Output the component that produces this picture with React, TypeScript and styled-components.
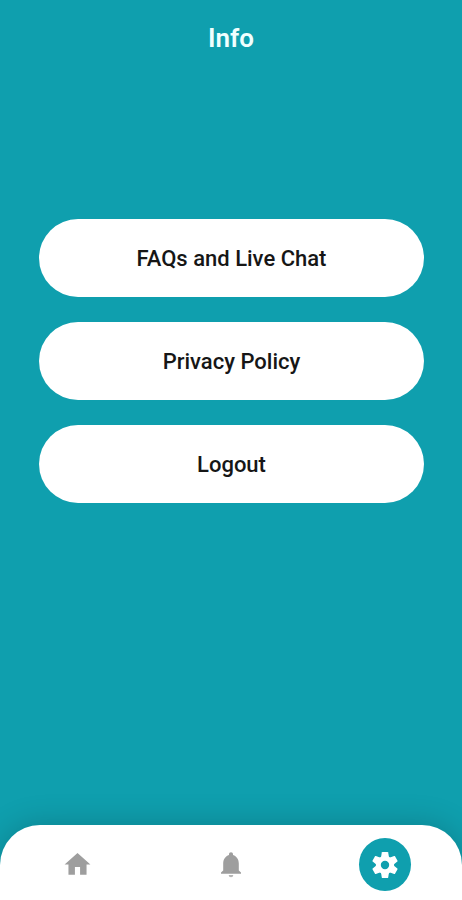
import React from "react";
import styled, { createGlobalStyle } from "styled-components";
import { MdHome } from "react-icons/md";

const GlobalStyle = createGlobalStyle`
  * { box-sizing: border-box; }
  body { margin: 0; background: #0f9fae; font-family: Roboto, "Liberation Sans", sans-serif; }
`;

const Screen = styled.div`
  min-height: 100vh;
  display: flex;
  flex-direction: column;
  background: #0f9fae;
`;

const Header = styled.header`
  height: 76px;
  display: flex;
  align-items: center;
  justify-content: center;
`;

const Title = styled.h1`
  margin: 0;
  font-size: 26px;
  line-height: 32px;
  font-weight: 600;
  color: #f0ffff;
`;

const Menu = styled.main`
  flex: 1;
  display: flex;
  flex-direction: column;
  gap: 25px;
  padding: 143px 38px 40px 39px;
`;

const MenuButton = styled.button`
  height: 78px;
  padding: 2px 24px 0;
  border: 0;
  border-radius: 39px;
  background: #fff;
  color: #161616;
  font-family: inherit;
  font-size: 22px;
  font-weight: 500;
  line-height: 28px;
  cursor: pointer;
`;

const BottomBar = styled.nav`
  height: 75px;
  display: grid;
  grid-template-columns: repeat(3, 1fr);
  place-items: center;
  padding-top: 4px;
  border-radius: 40px 40px 0 0;
  background: #fff;
  box-shadow: 0 0 32px rgba(0, 0, 0, 0.2);
`;

const Tab = styled.button<{ $active?: boolean }>`
  width: 52px;
  height: 53px;
  display: flex;
  align-items: center;
  justify-content: center;
  padding: 0;
  border: 0;
  border-radius: 50%;
  background: ${(p) => (p.$active ? "#0f9fae" : "transparent")};
  color: ${(p) => (p.$active ? "#fff" : "#9e9e9e")};
  font-size: 31px;
  cursor: pointer;
`;

function BellIcon() {
  return (
    <svg width="32" height="32" viewBox="0 0 32 32" fill="currentColor" aria-hidden="true">
      <path d="M16 3.2c-1.2 0-2 .9-2 2v.9c-3.7 1.3-5.8 4.4-5.8 8.4v6.9L6 23.4v1.4h20v-1.4l-2.2-2v-6.9c0-4-2.1-7.1-5.8-8.4v-.9c0-1.1-.8-2-2-2z" />
      <path d="M13.7 26h4.6a2.3 2.3 0 0 1-4.6 0z" opacity="0.75" />
    </svg>
  );
}

function GearIcon() {
  return (
    <svg width="32" height="32" viewBox="-16 -16 32 32" fill="currentColor" aria-hidden="true">
      <circle r="6.7" fill="none" stroke="currentColor" strokeWidth="5" />
      {[0, 60, 120, 180, 240, 300].map((angle) => (
        <path
          key={angle}
          d="M-2.5 -13h5q.6 0 .7.6l.8 5h-8l.8-5q.1-.6.7-.6z"
          transform={`rotate(${angle})`}
        />
      ))}
    </svg>
  );
}

export default function App() {
  return (
    <Screen>
      <GlobalStyle />
      <Header>
        <Title>Info</Title>
      </Header>
      <Menu>
        <MenuButton>FAQs and Live Chat</MenuButton>
        <MenuButton>Privacy Policy</MenuButton>
        <MenuButton>Logout</MenuButton>
      </Menu>
      <BottomBar aria-label="Main">
        <Tab aria-label="Home"><MdHome /></Tab>
        <Tab aria-label="Notifications"><BellIcon /></Tab>
        <Tab aria-label="Info" aria-current="page" $active><GearIcon /></Tab>
      </BottomBar>
    </Screen>
  );
}
